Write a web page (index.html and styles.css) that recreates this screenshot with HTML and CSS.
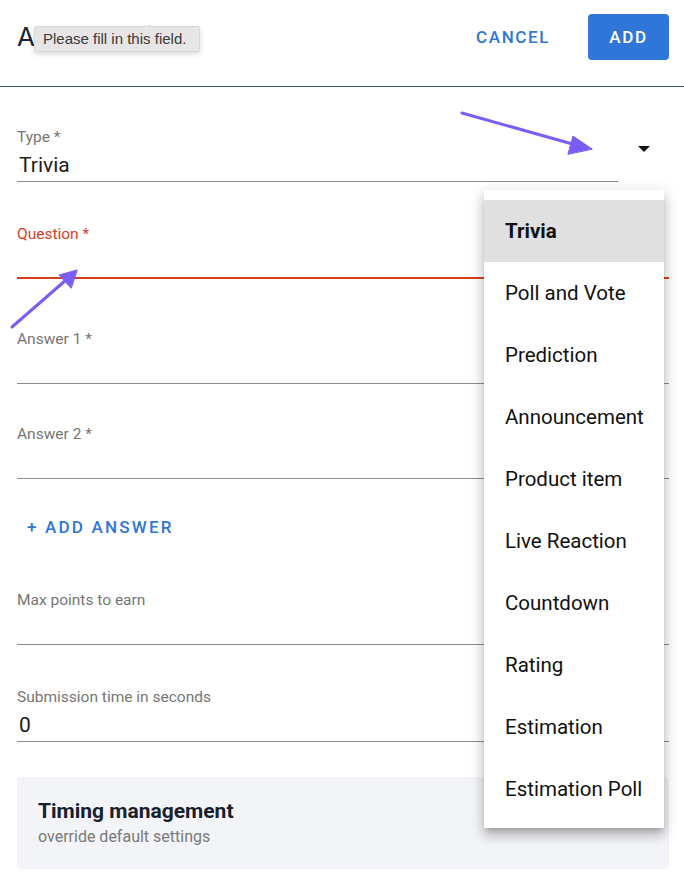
FILE: index.html
```html
<!DOCTYPE html>
<html>
<head>
<meta charset="utf-8">
<link rel="stylesheet" href="styles.css">
</head>
<body>
<div class="page">
  <header class="header">
    <h1 class="title">Add Question</h1>
    <div class="actions">
      <button class="btn-text">CANCEL</button>
      <button class="btn-primary">ADD</button>
    </div>
  </header>

  <form class="form">
    <div class="field field-type">
      <div class="field-main">
        <div class="label">Type *</div>
        <div class="input">Trivia</div>
      </div>
      <svg class="caret" width="12" height="6" viewBox="0 0 12 6"><path d="M0 0h12L6 6z" fill="#111"/></svg>
    </div>

    <div class="field field-error gap-q">
      <div class="label">Question *</div>
      <div class="input"></div>
    </div>

    <div class="field gap-a1">
      <div class="label">Answer 1 *</div>
      <div class="input"></div>
    </div>

    <div class="field gap-a2">
      <div class="label">Answer 2 *</div>
      <div class="input"></div>
    </div>

    <button type="button" class="btn-add">+ ADD ANSWER</button>

    <div class="field gap-max">
      <div class="label">Max points to earn</div>
      <div class="input"></div>
    </div>

    <div class="field gap-sub">
      <div class="label">Submission time in seconds</div>
      <div class="input">0</div>
    </div>

    <div class="timing">
      <div class="timing-title">Timing management</div>
      <div class="timing-sub">override default settings</div>
    </div>
  </form>

  <div class="tooltip">Please fill in this field.</div>

  <ul class="menu">
    <li class="menu-item selected">Trivia</li>
    <li class="menu-item">Poll and Vote</li>
    <li class="menu-item">Prediction</li>
    <li class="menu-item">Announcement</li>
    <li class="menu-item">Product item</li>
    <li class="menu-item">Live Reaction</li>
    <li class="menu-item">Countdown</li>
    <li class="menu-item">Rating</li>
    <li class="menu-item">Estimation</li>
    <li class="menu-item">Estimation Poll</li>
  </ul>

  <svg class="arrows" width="684" height="884" viewBox="0 0 684 884">
    <g stroke="#7b5cf5" stroke-width="3" stroke-linecap="round" fill="#7b5cf5">
      <line x1="462" y1="113" x2="576" y2="145"/>
      <path d="M592 149 L573 136 L568 154 Z" stroke-width="1"/>
      <line x1="12" y1="327" x2="66" y2="280"/>
      <path d="M77 270 L59 275 L71 288 Z" stroke-width="1"/>
    </g>
  </svg>
</div>
</body>
</html>
```

FILE: styles.css
```css
* { box-sizing: border-box; }
html, body { margin: 0; padding: 0; background: #fff; }
body { font-family: Roboto, "Noto Sans", "Liberation Sans", sans-serif; color: #1f1f1f; }
.page { position: relative; width: 684px; height: 884px; overflow: hidden; }

.header {
  height: 87px;
  display: flex;
  justify-content: space-between;
  align-items: flex-start;
  padding: 14px 15px 0 17px;
  border-bottom: 1px solid #44506b;
}
.title {
  margin: 0;
  font-family: Inter, Roboto, sans-serif;
  font-weight: 400;
  font-size: 26px;
  line-height: 46px;
  color: #1a2436;
}
.actions { display: flex; align-items: center; gap: 22px; }
.btn-text, .btn-primary, .btn-add {
  font-family: Roboto, sans-serif;
  font-weight: 500;
  font-size: 17px;
  letter-spacing: 1.6px;
  border: none;
  cursor: pointer;
}
.btn-text { background: transparent; color: #2f76d8; padding: 0 16px; height: 46px; }
.btn-primary {
  background: #2f76d8;
  color: #fff;
  width: 81px;
  height: 46px;
  border-radius: 4px;
  padding: 0;
}

.form { padding: 0 15px 0 17px; display: flex; flex-direction: column; }
.field { margin-top: 41px; }
.gap-q { margin-top: 43px; }
.gap-a1 { margin-top: 51px; }
.gap-a2 { margin-top: 41px; }
.gap-max { margin-top: 46px; }
.gap-sub { margin-top: 43px; }

.field-type { display: flex; align-items: flex-start; }
.field-type .field-main { width: 601px; }
.caret { margin: 18px 0 0 20px; }

.label { font-size: 15.5px; line-height: 18px; color: #767676; }
.input {
  font-size: 21px;
  line-height: 24px;
  height: 36px;
  padding: 7px 0 4px 2px;
  color: #1c1c1c;
  border-bottom: 1px solid #8c8c8c;
}
.field-error .label { color: #d6401f; }
.field-error .input { border-bottom: 2px solid #d6401f; padding-bottom: 3px; }

.btn-add {
  align-self: flex-start;
  background: transparent;
  color: #2f76d8;
  height: 36px;
  padding: 0 10px;
  margin-top: 30px;
  letter-spacing: 2.2px;
}

.timing {
  margin-top: 35px;
  height: 92px;
  background: #f3f4f7;
  border-radius: 4px;
  padding: 22px 21px;
}
.timing-title { font-size: 21px; font-weight: 700; line-height: 24px; color: #17202e; }
.timing-sub { font-size: 16px; line-height: 20px; color: #7a7a7a; margin-top: 4px; }

.tooltip {
  position: absolute;
  left: 34px;
  top: 26px;
  width: 166px;
  height: 26px;
  background: #e7e5e5;
  border: 1px solid #d9d9d9;
  border-radius: 2px;
  box-shadow: 0 2px 5px rgba(0,0,0,0.15);
  font-family: "Liberation Sans", Arial, sans-serif;
  font-size: 15px;
  line-height: 24px;
  color: #3a3a3a;
  padding-left: 8px;
  white-space: nowrap;
}

.menu {
  position: absolute;
  left: 484px;
  top: 190px;
  width: 180px;
  margin: 0;
  padding: 10px 0 8px;
  list-style: none;
  background: #fff;
  box-shadow: 0 5px 5px -3px rgba(0,0,0,0.2), 0 8px 10px 1px rgba(0,0,0,0.14), 0 3px 14px 2px rgba(0,0,0,0.12);
}
.menu-item {
  height: 62px;
  line-height: 62px;
  padding-left: 21px;
  font-size: 20.5px;
  color: #111;
  white-space: nowrap;
}
.menu-item.selected { background: #e0e0e0; font-weight: 700; }

.arrows { position: absolute; left: 0; top: 0; pointer-events: none; }
```
